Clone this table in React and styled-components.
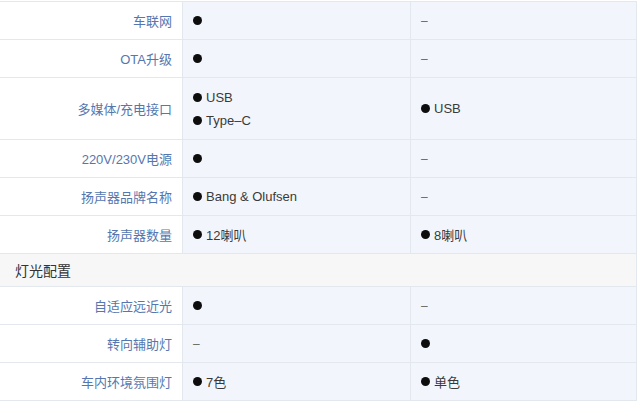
import React from "react";
import styled, { createGlobalStyle } from "styled-components";

const Global = createGlobalStyle`
  html, body { margin: 0; padding: 0; background: #ffffff; }
  body { font-family: "Liberation Sans", "Noto Sans CJK SC", sans-serif; }
`;

const Table = styled.div`
  width: 637px;
  margin-top: 1px;
  border-top: 1px solid #e3e7ee;
  display: flex;
  flex-direction: column;
`;

const Row = styled.div`
  display: grid;
  grid-template-columns: 183px 228px 226px;
  height: ${(p) => p.$h || 38}px;
  box-sizing: border-box;
  border-bottom: 1px solid #e3e7ee;
`;

const LabelCell = styled.div`
  display: flex;
  align-items: center;
  justify-content: flex-end;
  padding-right: 10px;
  border-right: 1px solid #e3e7ee;
  background: #ffffff;
  color: #5577b0;
  font-size: 13px;
`;

const ValueCell = styled.div`
  display: flex;
  flex-direction: column;
  justify-content: center;
  gap: 6px;
  padding-left: 10px;
  border-right: 1px solid #e3e7ee;
  background: #f2f6fc;
  color: #3a3a3a;
  font-size: 13px;
`;

const Item = styled.div`
  display: flex;
  align-items: center;
  gap: 4px;
  height: 17px;
`;

const Dot = styled.span`
  width: 9px;
  height: 9px;
  border-radius: 50%;
  background: #0d0d0d;
  flex: none;
`;

const Dash = styled.span`
  color: #666666;
  font-size: 12px;
`;

const SectionRow = styled.div`
  height: 33px;
  box-sizing: border-box;
  border-bottom: 1px solid #e3e7ee;
  border-right: 1px solid #e3e7ee;
  background: #f7f7f7;
  display: flex;
  align-items: center;
  padding-left: 15px;
  color: #333333;
  font-size: 14px;
`;

const Value = ({ v }) => {
  if (v === "-") return <Dash>–</Dash>;
  const items = Array.isArray(v) ? v : [v];
  return items.map((t, i) => (
    <Item key={i}>
      <Dot />
      {t ? <span>{t}</span> : null}
    </Item>
  ));
};

const rowsA = [
  { label: "车联网", a: "", b: "-" },
  { label: "OTA升级", a: "", b: "-" },
  { label: "多媒体/充电接口", a: ["USB", "Type–C"], b: "USB", h: 62 },
  { label: "220V/230V电源", a: "", b: "-" },
  { label: "扬声器品牌名称", a: "Bang & Olufsen", b: "-" },
  { label: "扬声器数量", a: "12喇叭", b: "8喇叭" },
];

const rowsB = [
  { label: "自适应远近光", a: "", b: "-" },
  { label: "转向辅助灯", a: "-", b: "" },
  { label: "车内环境氛围灯", a: "7色", b: "单色" },
];

const SpecRow = ({ r }) => (
  <Row $h={r.h}>
    <LabelCell>{r.label}</LabelCell>
    <ValueCell>
      <Value v={r.a} />
    </ValueCell>
    <ValueCell>
      <Value v={r.b} />
    </ValueCell>
  </Row>
);

export default function App() {
  return (
    <>
      <Global />
      <Table>
        {rowsA.map((r) => (
          <SpecRow key={r.label} r={r} />
        ))}
        <SectionRow>灯光配置</SectionRow>
        {rowsB.map((r) => (
          <SpecRow key={r.label} r={r} />
        ))}
      </Table>
    </>
  );
}
